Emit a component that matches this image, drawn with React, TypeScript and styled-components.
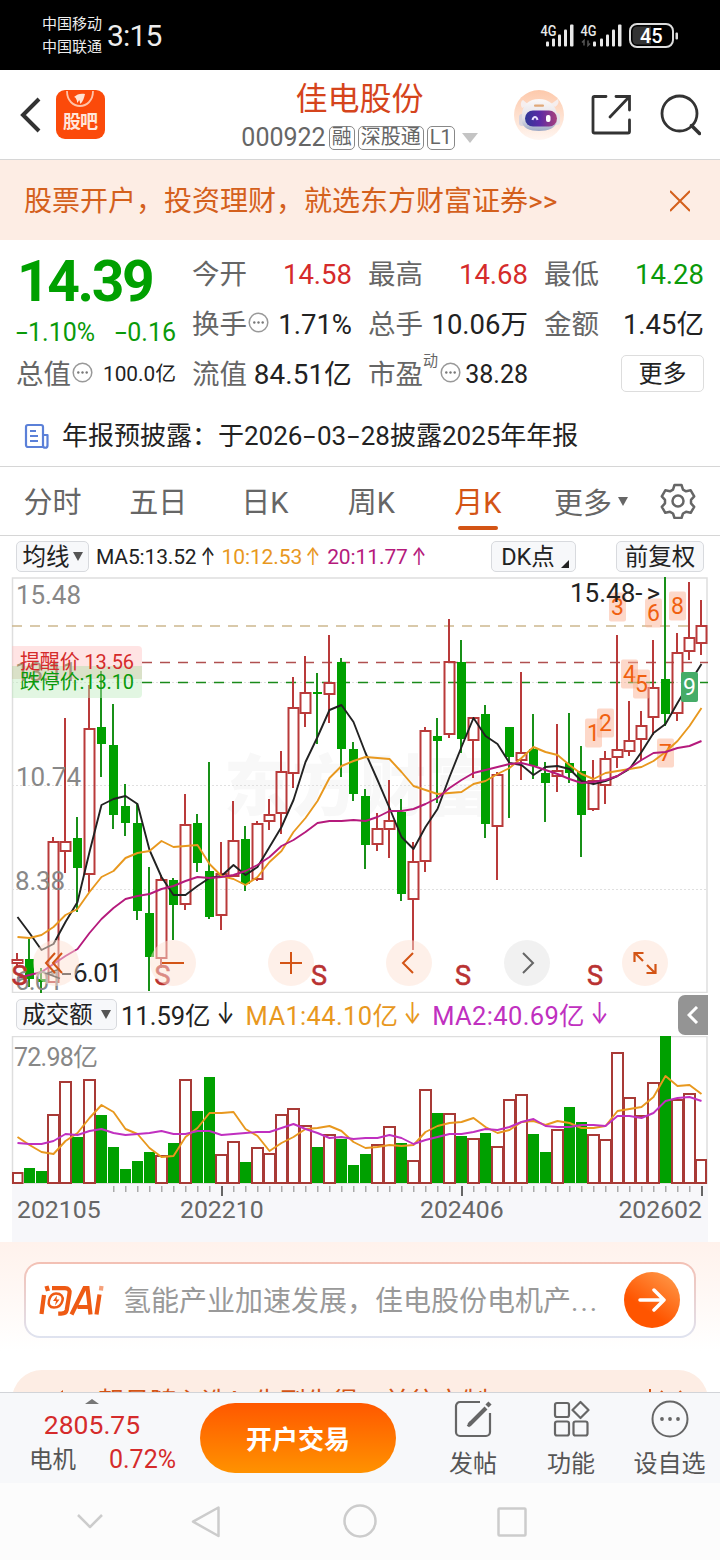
import React from "react";
import styled, { createGlobalStyle } from "styled-components";

const GlobalStyle = createGlobalStyle`
  * { box-sizing: border-box; }
  html, body { margin: 0; padding: 0; background: #fff; }
  body { font-family: Roboto, "Noto Sans CJK SC", sans-serif; color: #222; overflow: hidden; }
  svg { display: block; flex: none; }
`;

const RED = "#d52b2b";
const GREEN = "#0a9a0a";
const ORANGE = "#d35415";
const SVG_FONT = 'Roboto, "Noto Sans CJK SC", sans-serif';

const Screen = styled.div`
  width: 720px;
  height: 1560px;
  display: flex;
  flex-direction: column;
  background: #fff;
  overflow: hidden;
`;

const Text = styled.span<{ $size: number; $color?: string; $ls?: number; $bold?: boolean }>`
  font-size: ${(p) => p.$size}px;
  line-height: 1.2;
  color: ${(p) => p.$color ?? "#222"};
  letter-spacing: ${(p) => p.$ls ?? 0}px;
  font-weight: ${(p) => (p.$bold ? 700 : 400)};
  white-space: nowrap;
`;
/* a hyphen as wide as a digit */
const Dash = styled.span<{ $w: number }>`
  display: inline-block;
  width: ${(p) => p.$w}px;
  text-align: center;
  transform: scaleX(1.7);
  letter-spacing: 0;
`;

/* ---------- status bar ---------- */
const StatusBar = styled.div`
  height: 70px;
  flex: none;
  background: #000;
  display: flex;
  align-items: center;
  padding: 2px 40px 0 42px;
`;
const Carriers = styled.div`
  display: flex;
  flex-direction: column;
  font-size: 15px;
  line-height: 23px;
  color: #eee;
  width: 65px;
`;
const StatusSpacer = styled.div`flex: 1;`;

const SignalIcons = () => (
  <svg width="140" height="34" viewBox="540 18.500 140 34" fontFamily={SVG_FONT}>
    <g fill="#e8e8e8">
      <text x="540.5" y="35" fontSize="14" fontWeight="500" textLength="16" lengthAdjust="spacingAndGlyphs">4G</text>
      <rect x="546" y="41" width="3" height="5" rx="1" /><rect x="552" y="38" width="3" height="8" rx="1" />
      <rect x="558" y="34" width="3" height="12" rx="1" /><rect x="564" y="29" width="3" height="17" rx="1" />
      <rect x="570" y="24" width="3.500" height="22" rx="1" />
      <text x="580.5" y="35" fontSize="14" fontWeight="500" textLength="16" lengthAdjust="spacingAndGlyphs">4G</text>
      <rect x="593" y="41" width="3" height="5" rx="1" /><rect x="600" y="38" width="3" height="8" rx="1" />
      <rect x="606" y="34" width="3" height="12" rx="1" /><rect x="612" y="29" width="3" height="17" rx="1" />
      <rect x="618" y="24" width="3.500" height="22" rx="1" />
    </g>
    <path d="M584 45v-5l-2 2M588 40v5l2-2" stroke="#555" strokeWidth="1.500" fill="none" />
    <rect x="630" y="23.500" width="43" height="23" rx="7" fill="#000" stroke="#ddd" strokeWidth="2" />
    <path d="M651 26h-14a4.500 4.500 0 0 0-4.500 4.500v9a4.500 4.500 0 0 0 4.500 4.500h14z" fill="#333" />
    <rect x="675.500" y="32" width="2.500" height="7" rx="1" fill="#ddd" />
    <text x="640" y="42.500" fontSize="20" fontWeight="500" fill="#fff">45</text>
  </svg>
);

/* ---------- header ---------- */
const Header = styled.header`
  height: 90px;
  flex: none;
  display: flex;
  align-items: center;
  border-bottom: 1px solid #d6d6d6;
  padding: 0 19px;
`;
const TitleBlock = styled.div`
  flex: 1;
  display: flex;
  flex-direction: column;
  align-items: center;
  padding: 3px 0 0 100px;
`;
const CodeRow = styled.div`
  display: flex;
  align-items: center;
  gap: 3px;
  height: 28px;
  margin-top: 5px;
`;
const Tag = styled.span`
  height: 24px;
  line-height: 21px;
  padding: 0 2px;
  border: 1.5px solid #888;
  border-radius: 5px;
  font-size: 20px;
  color: #666;
`;
const Triangle = styled.i<{ $w: number; $h: number; $color: string; $ml?: number }>`
  width: 0;
  height: 0;
  margin-left: ${(p) => p.$ml ?? 0}px;
  border-left: ${(p) => p.$w / 2}px solid transparent;
  border-right: ${(p) => p.$w / 2}px solid transparent;
  border-top: ${(p) => p.$h}px solid ${(p) => p.$color};
`;
const HeaderIcon = styled.div<{ $ml: number }>`
  margin-left: ${(p) => p.$ml}px;
`;

const BackIcon = () => (
  <svg width="24" height="38" viewBox="0 0 24 38" fill="none" stroke="#333" strokeWidth="4">
    <path d="M20 3 4 19l16 16" />
  </svg>
);
const GubaLogo = () => (
  <svg width="49" height="49" viewBox="0 0 49 49">
    <rect width="49" height="49" rx="9" fill="#fb4a0a" />
    <path d="M11 1c0 20 26 20 26 0" fill="none" stroke="#ffc3a8" strokeWidth="1.800" />
    <path d="M18 7c3-3 7-4 11-3-1 4-2 8-5 10 0-2 0-3-1-4 0 1-1 2-2 3 0-2 0-3-1-4 0-1-1-2-2-2z" fill="#ffe2d2" />
    <text x="7" y="38" fontSize="18" fontWeight="700" fill="#ffe6da" fontFamily={SVG_FONT} textLength="35">股吧</text>
  </svg>
);
const RobotIcon = () => (
  <svg width="50" height="50" viewBox="0 0 50 50">
    <defs>
      <linearGradient id="rbg" x1="0" y1="0" x2="0" y2="1">
        <stop offset="0" stopColor="#fdc9ab" /><stop offset="1" stopColor="#fff6f1" />
      </linearGradient>
      <linearGradient id="visor" x1="0" y1="0" x2="1" y2="0">
        <stop offset="0" stopColor="#2f3796" /><stop offset=".45" stopColor="#5a2aa6" /><stop offset="1" stopColor="#a8407c" />
      </linearGradient>
      <linearGradient id="head" x1="0" y1="0" x2="0" y2="1">
        <stop offset="0" stopColor="#fbf8f8" /><stop offset=".6" stopColor="#e3e0e6" /><stop offset="1" stopColor="#9aa6c4" />
      </linearGradient>
    </defs>
    <circle cx="25" cy="25" r="25" fill="url(#rbg)" />
    <path d="M8 18c-2-4-1-7 1-8l6 5M41 17c4-3 4-5 3-8l-7 5" fill="#f6eeee" />
    <rect x="5" y="24" width="6" height="12" rx="3" fill="#d9d5de" /><rect x="40" y="23" width="6" height="12" rx="3" fill="#e6e2e8" />
    <path d="M8 25c0-10 7-16 17-16s17 6 18 16v6c-1 7-9 10-18 10S8 38 8 31z" fill="url(#head)" />
    <rect x="11" y="20.500" width="32" height="16" rx="8" fill="url(#visor)" />
    <rect x="20" y="14.500" width="10" height="2.200" rx="1" fill="#e0a878" />
    <path d="M18.500 30c1-4 4-4 5 0" stroke="#e8e0ff" strokeWidth="2" fill="none" />
    <rect x="32" y="25" width="4.500" height="7" rx="2" fill="#fff" />
  </svg>
);
const ShareIcon = () => (
  <svg width="42" height="42" viewBox="0 0 42 42" fill="none" stroke="#333" strokeWidth="2.800" strokeLinecap="round">
    <path d="M16 2.500H4.500A1.500 1.500 0 0 0 3 4v33.500A1.500 1.500 0 0 0 4.500 39H38a1.500 1.500 0 0 0 1.500-1.500V26" />
    <path d="M26 2.500h13.500V16M39 3 20 23" />
  </svg>
);
const SearchIcon = () => (
  <svg width="42" height="42" viewBox="0 0 42 42" fill="none" stroke="#333" strokeWidth="2.800">
    <circle cx="20.500" cy="19.500" r="17.500" />
    <path d="m32.500 31.500 8 8" strokeWidth="3.500" strokeLinecap="round" />
  </svg>
);

/* ---------- ad banner ---------- */
const Banner = styled.div`
  height: 80px;
  flex: none;
  background: #fdede4;
  display: flex;
  align-items: center;
  justify-content: space-between;
  padding: 2px 30px 0 24px;
`;
const BannerText = styled(Text)`
  padding-top: 2px;
`;

/* ---------- quote ---------- */
const Quote = styled.section`
  height: 159px;
  flex: none;
  display: grid;
  grid-template-columns: 160px 1fr;
  column-gap: 16px;
  padding: 9px 16px 0;
`;
const PriceColumn = styled.div`
  display: flex;
  flex-direction: column;
`;
const PriceBox = styled.div`
  height: 66px;
  display: flex;
  align-items: center;
  padding-left: 1px;
`;
const Cells = styled.div`
  display: grid;
  grid-template-columns: repeat(3, 160px);
  grid-auto-rows: 50px;
  column-gap: 16px;
`;
const Cell = styled.div<{ $h?: number }>`
  display: flex;
  align-items: center;
  justify-content: space-between;
  height: ${(p) => p.$h ?? 50}px;
  padding-top: 1px;
`;
const Label = styled.span`
  display: flex;
  align-items: center;
  font-size: 27.5px;
  line-height: 1.2;
  color: #666;
  white-space: nowrap;
  svg { margin: -5px 0 0 1px; }
`;
const Sup = styled.span`
  font-size: 15px;
  color: #666;
  margin: -27px 1px 0 0;
`;
const MoreButton = styled.button`
  margin-left: auto;
  width: 83px;
  height: 37px;
  border: 1px solid #ddd;
  border-radius: 5px;
  background: #fff;
  font: 24px/34px Roboto, "Noto Sans CJK SC", sans-serif;
  color: #222;
  padding: 0;
  margin-top: -2px;
`;
const InfoIcon = () => (
  <svg width="21" height="21" viewBox="0 0 21 21">
    <circle cx="10.500" cy="10.500" r="9.300" fill="none" stroke="#999" strokeWidth="1.500" />
    <g fill="#777"><circle cx="6.300" cy="10.500" r="1.200" /><circle cx="10.500" cy="10.500" r="1.200" /><circle cx="14.700" cy="10.500" r="1.200" /></g>
  </svg>
);
const Notice = styled.div`
  height: 68px;
  flex: none;
  display: flex;
  align-items: center;
  gap: 12px;
  padding: 6px 24px 0;
  border-bottom: 1px solid #d6d6d6;
`;
const NoticeText = styled(Text)`
  padding-top: 3px;
`;
const NoticeIcon = () => (
  <svg width="26" height="26" viewBox="0 0 26 26" fill="none" stroke="#5b80d8" strokeWidth="2.200" strokeLinejoin="round">
    <path d="M19 24H4a2 2 0 0 1-2-2V4a2 2 0 0 1 2-2h13a2 2 0 0 1 2 2v18.500a1.800 1.800 0 0 0 4.500 0V12H19" />
    <path d="M6 8h6M6 13h8M6 18h8" />
  </svg>
);

/* ---------- tabs ---------- */
const Tabs = styled.nav`
  height: 69px;
  flex: none;
  display: grid;
  grid-template-columns: 105px repeat(4, 106.5px) 125px 1fr;
  border-bottom: 1px solid #d6d6d6;
`;
const Tab = styled.div<{ $active?: boolean }>`
  display: flex;
  flex-direction: column;
  align-items: center;
  justify-content: space-between;
  font-size: 29px;
  line-height: 35px;
  color: ${(p) => (p.$active ? ORANGE : "#666")};
  padding: 19px 0 5px;
  &::after {
    content: "";
    width: 40px;
    height: 4px;
    border-radius: 2px;
    background: ${(p) => (p.$active ? ORANGE : "transparent")};
  }
`;
const MoreTab = styled.div`
  display: flex;
  align-items: center;
  gap: 6px;
  font-size: 29px;
  color: #666;
  padding-left: 23px;
`;
const GearCell = styled.div`
  display: flex;
  align-items: center;
  padding-left: 4px;
`;
const GearIcon = () => (
  <svg width="36" height="36" viewBox="0 0 36 36" fill="none" stroke="#666" strokeWidth="2.500" strokeLinejoin="round">
    <path d="M14.500 2h7l1.500 4.600 3 1.700 4.700-1 3.500 6-3.200 3.600v3.400l3.200 3.500-3.500 6-4.700-1-3 1.700-1.500 4.500h-7L13 30.500l-3-1.700-4.700 1-3.500-6L5 20.300v-3.400l-3.200-3.600 3.500-6 4.700 1 3-1.700z" />
    <circle cx="18" cy="18" r="5.500" />
  </svg>
);

/* ---------- moving-average bar ---------- */
const MaBar = styled.div`
  height: 41px;
  flex: none;
  display: flex;
  align-items: center;
  padding: 0 16px;
`;
const Chip = styled.button<{ $w: number; $ml?: number }>`
  width: ${(p) => p.$w}px;
  margin-left: ${(p) => p.$ml ?? 0}px;
  height: 31px;
  flex: none;
  display: flex;
  align-items: center;
  justify-content: center;
  gap: 3px;
  border: 1px solid #d8dade;
  border-radius: 5px;
  background: #f7f8fa;
  font: 23.5px/28px Roboto, "Noto Sans CJK SC", sans-serif;
  color: #222;
  padding: 0;
  white-space: nowrap;
`;
const Corner = styled.i`
  border-left: 8px solid transparent;
  border-bottom: 8px solid #222;
  align-self: flex-end;
  margin: 0 -3px 3px 3px;
`;
const MaText = styled.span<{ $color: string; $ml: number; $size: number; $ls: number; $up?: number }>`
  margin-left: ${(p) => p.$ml}px;
  margin-top: ${(p) => -(p.$up ?? 0)}px;
  color: ${(p) => p.$color};
  font-size: ${(p) => p.$size}px;
  letter-spacing: ${(p) => p.$ls}px;
  display: flex;
  align-items: center;
  white-space: nowrap;
`;
const Arrow = styled.span<{ $w: number }>`
  font-family: Inter, sans-serif;
  width: ${(p) => p.$w}px;
  display: flex;
  justify-content: center;
  letter-spacing: 0;
  transform: scale(0.85, 1.15);
`;

/* ---------- charts ---------- */
const ChartArea = styled.div`
  position: relative;
  height: 416px;
  flex: none;
`;
const ToolButton = styled.div<{ $x: number; $grey?: boolean }>`
  position: absolute;
  left: ${(p) => p.$x - 23}px;
  top: 363px;
  width: 46px;
  height: 46px;
  border-radius: 50%;
  background: ${(p) => (p.$grey ? "rgba(238,238,238,.8)" : "rgba(253,226,212,.5)")};
  color: ${(p) => (p.$grey ? "#666" : ORANGE)};
  display: flex;
  align-items: center;
  justify-content: center;
`;

// high, body top, body bottom, low, rising
type Candle = [number, number, number, number, number];
const CANDLES: Candle[] = [
  [953, 960, 963, 968, 1], [939, 959, 979, 987, 0], [968, 979, 982, 993, 0], [837, 842, 982, 983, 1],
  [718, 842, 851, 873, 1], [817, 838, 868, 912, 0], [685, 729, 874, 892, 1], [671, 727, 744, 777, 0],
  [704, 745, 815, 829, 0], [784, 806, 823, 836, 0], [803, 823, 911, 920, 0], [867, 913, 957, 991, 0],
  [875, 880, 958, 968, 1], [878, 880, 905, 940, 0], [794, 825, 904, 910, 1], [814, 823, 863, 872, 0],
  [762, 871, 917, 919, 0], [842, 874, 915, 930, 1], [801, 841, 876, 877, 1], [826, 839, 884, 891, 0],
  [821, 824, 879, 881, 1], [799, 815, 821, 830, 1], [751, 772, 813, 834, 1], [677, 708, 773, 788, 1],
  [656, 693, 713, 727, 1], [673, 692, 694, 744, 0], [635, 683, 694, 723, 1], [658, 662, 749, 777, 0],
  [742, 749, 794, 801, 0], [789, 796, 845, 869, 0], [813, 829, 844, 851, 1], [780, 821, 829, 858, 1],
  [799, 812, 894, 901, 0], [842, 862, 899, 950, 1], [727, 731, 861, 872, 1], [718, 736, 741, 803, 0],
  [619, 662, 734, 738, 1], [640, 662, 739, 753, 0], [717, 718, 740, 778, 1], [705, 714, 824, 838, 0],
  [772, 775, 826, 880, 1], [727, 727, 757, 818, 0], [672, 753, 760, 780, 1], [714, 749, 766, 779, 0],
  [762, 773, 783, 822, 0], [724, 771, 776, 792, 1], [713, 763, 773, 783, 0], [746, 771, 815, 857, 0],
  [760, 781, 809, 811, 1], [751, 759, 785, 804, 1], [635, 750, 757, 768, 1], [701, 741, 751, 756, 1],
  [711, 726, 739, 760, 1], [640, 688, 717, 735, 1], [577, 679, 714, 726, 0], [633, 653, 713, 721, 1],
  [582, 638, 651, 660, 1], [600, 626, 643, 655, 1],
];
const MA5 = [917, 933, 950, 944, 922, 902, 852, 805, 799, 796, 804, 850, 877, 895, 895, 886, 878, 876, 865, 875, 867, 847, 827, 800, 762, 737, 710, 705, 722, 753, 780, 808, 837, 849, 827, 809, 777, 747, 718, 736, 744, 763, 765, 775, 767, 766, 769, 781, 784, 781, 776, 769, 752, 733, 724, 703, 683, 664];
const MA10 = [937, 938, 935, 927, 915, 909, 892, 877, 871, 858, 853, 851, 841, 847, 846, 845, 864, 876, 879, 885, 877, 862, 851, 832, 818, 801, 778, 766, 761, 757, 758, 759, 772, 786, 790, 794, 793, 792, 784, 781, 774, 768, 758, 747, 752, 755, 765, 774, 779, 773, 771, 769, 767, 761, 752, 741, 726, 708];
const MA20 = [978, 975, 972, 964, 956, 949, 933, 919, 908, 899, 896, 894, 889, 886, 881, 877, 878, 877, 875, 871, 865, 857, 846, 840, 832, 823, 821, 821, 820, 821, 817, 811, 811, 809, 804, 798, 788, 780, 773, 770, 767, 764, 763, 766, 770, 774, 779, 783, 782, 780, 776, 768, 760, 753, 752, 748, 746, 741];
const VOLUMES = [1172, 1168, 1171, 1114, 1081, 1137, 1079, 1115, 1147, 1169, 1161, 1152, 1155, 1143, 1079, 1111, 1077, 1154, 1141, 1162, 1147, 1153, 1114, 1108, 1125, 1147, 1134, 1139, 1165, 1154, 1144, 1126, 1143, 1160, 1089, 1113, 1113, 1136, 1138, 1133, 1146, 1099, 1094, 1134, 1152, 1129, 1107, 1122, 1134, 1139, 1052, 1097, 1115, 1082, 1036, 1099, 1093, 1159];
const FILLED = new Set(VOLUMES.map((_, i) => i).filter((i) => !CANDLES[i][4]));
const VMA1 = [1137, 1145, 1152, 1154, 1141, 1133, 1118, 1105, 1112, 1129, 1134, 1148, 1157, 1156, 1137, 1128, 1113, 1113, 1112, 1129, 1136, 1151, 1143, 1137, 1129, 1128, 1126, 1131, 1142, 1148, 1147, 1145, 1146, 1145, 1132, 1126, 1123, 1122, 1118, 1127, 1133, 1130, 1122, 1121, 1125, 1121, 1123, 1128, 1128, 1126, 1111, 1109, 1107, 1097, 1076, 1086, 1085, 1094];
const VMA2 = [1143, 1144, 1144, 1141, 1134, 1135, 1131, 1129, 1133, 1135, 1134, 1133, 1131, 1134, 1134, 1131, 1131, 1135, 1134, 1133, 1132, 1132, 1128, 1124, 1129, 1133, 1138, 1137, 1139, 1138, 1138, 1135, 1138, 1144, 1140, 1137, 1134, 1134, 1132, 1129, 1130, 1127, 1122, 1119, 1126, 1127, 1127, 1125, 1125, 1126, 1116, 1116, 1118, 1113, 1101, 1098, 1097, 1101];
FILLED.delete(41);
[39].forEach((i) => FILLED.add(i));

const cx = (i: number) => 17 + i * 12;
const points = (v: number[]) => v.map((y, i) => `${cx(i) + 0.5},${y}`).join(" ");

const MARKS: [string, number, number][] = [
  ["1", 593, 733], ["2", 605, 723], ["3", 617, 607], ["4", 629, 674], ["5", 641, 684],
  ["6", 653, 613], ["7", 665, 753], ["8", 677, 606],
];

const PriceChart = () => (
  <svg width="720" height="416" viewBox="0 577 720 416" fontFamily={SVG_FONT}>
    <text x="224" y="810" fontSize="66" fontWeight="900" fill="#f8f8f8" textLength="270">东方财富</text>
    <g stroke="#e0e0e0" strokeDasharray="2 2"><path d="M12 682.500H708M12 785.500H708M12 889.500H708" /></g>
    <rect x="12.500" y="578" width="694.500" height="414.500" fill="none" stroke="#dedede" strokeWidth="1.500" />
    <path d="M12 626H708" stroke="#cdb88e" strokeWidth="1.500" strokeDasharray="10 8" />
    <path d="M142 662.500H708" stroke="#b05050" strokeWidth="1.500" strokeDasharray="10 8" />
    <path d="M142 682.500H708" stroke="#1a8a1a" strokeWidth="1.500" strokeDasharray="10 8" />
    {CANDLES.map(([h, t, b, l, up], i) => {
      const x = cx(i);
      return up ? (
        <g key={i} stroke="#b93a3a" strokeWidth="2" fill="none">
          <path d={`M${x} ${h}V${t}M${x} ${b}V${l}`} />
          <rect x={x - 4.5} y={t} width="10" height={b - t} />
        </g>
      ) : (
        <g key={i} fill="#00a000">
          <rect x={x - 1} y={h} width="2" height={l - h} fill="#189018" />
          <rect x={x - 4} y={t} width="9" height={b - t} />
        </g>
      );
    })}
    {MARKS.map(([n, x, y]) => (
      <g key={n}>
        <rect x={x - 8} y={y - 14.5} width="17" height="29" rx="2" fill="rgba(252,178,148,.5)" />
        <text x={x + 0.5} y={y + 8} fontSize="23" fill="#f06010" textAnchor="middle">{n}</text>
      </g>
    ))}
    <g fill="none" strokeWidth="1.900" strokeLinejoin="round">
      <polyline points={points(MA5)} stroke="#222" />
      <polyline points={points(MA10)} stroke="#e8981e" />
      <polyline points={points(MA20)} stroke="#b51a7c" />
    </g>
    <rect x="681" y="672" width="17" height="30" rx="2" fill="#45ac68" />
    <text x="689.500" y="695" fontSize="23" fill="#fff" textAnchor="middle">9</text>
    <g fill="#888" fontSize="26">
      <text x="16" y="604" textLength="65">15.48</text>
      <text x="16" y="786" textLength="65">10.74</text>
      <text x="15" y="890" textLength="50">8.38</text>
      <text x="15" y="990" textLength="48">6.01</text>
    </g>
    <path d="M12 646h126a4 4 0 0 1 4 4v16H12z" fill="rgba(255,190,190,.42)" />
    <path d="M12 666h130v28a4 4 0 0 1-4 4H12z" fill="rgba(190,235,190,.45)" />
    <path d="M12 666h130v13H12z" fill="rgba(190,150,110,.22)" />
    <text x="15" y="681" fontSize="26" fill="#a89478" textLength="62">13.11</text>
    <text x="20" y="668.500" fontSize="20" fill={RED} textLength="114">提醒价 13.56</text>
    <text x="20" y="689" fontSize="20" fill={GREEN} textLength="114">跌停价:13.10</text>
    <g fill="#222" fontSize="26">
      <text x="570" y="602">15.48<tspan letterSpacing="4">-&gt;</tspan></text>
      <text x="73" y="982" textLength="49">6.01</text>
      <path d="M62 974h9M60 969l-13 4.500 13 5" stroke="#222" strokeWidth="1.800" fill="none" />
    </g>
    <g fill="#b93232" fontSize="27" textAnchor="middle" stroke="#b93232" strokeWidth=".6">
      <text x="19.500" y="985">S</text><text x="162.500" y="985">S</text><text x="319" y="985">S</text>
      <text x="463" y="985">S</text><text x="595" y="985">S</text>
    </g>
  </svg>
);

const ToolGlyph = ({ d, s = 2 }: { d: string; s?: number }) => (
  <svg width="28" height="28" viewBox="0 0 28 28" fill="none" stroke="currentColor" strokeWidth={s}><path d={d} /></svg>
);

const VolumeBar = styled.div`
  height: 43px;
  flex: none;
  display: flex;
  align-items: center;
  padding: 0 12px 0 16px;
`;
const CollapseTab = styled.div`
  margin-left: auto;
  width: 30px;
  height: 40px;
  border-radius: 7px 0 0 7px;
  background: #949494;
  display: flex;
  align-items: center;
  justify-content: center;
`;
const VolumeChart = () => (
  <svg width="720" height="148" viewBox="0 1036 720 148" fontFamily={SVG_FONT}>
    <rect x="12.500" y="1036.500" width="694.500" height="147" fill="none" stroke="#dedede" strokeWidth="1.500" />
    {VOLUMES.map((y, i) =>
      FILLED.has(i) ? (
        <rect key={i} x={cx(i) - 5} y={y} width="11" height={1183 - y} fill="#00a000" />
      ) : (
        <rect key={i} x={Math.max(cx(i) - 5, 13)} y={y + 1} width={i === 57 ? 10 : i === 0 ? 9.5 : 11} height={1182 - y} fill="#fff" stroke="#a83a36" strokeWidth="2" />
      )
    )}
    <g fill="none" strokeWidth="1.900" strokeLinejoin="round">
      <polyline points={points(VMA1)} stroke="#e8981e" />
      <polyline points={points(VMA2)} stroke="#c030c0" />
    </g>
    <text x="14" y="1066" fontSize="25" fill="#888" textLength="84">72.98亿</text>
  </svg>
);
const Axis = styled.div`
  height: 58px;
  flex: none;
  margin: 0 12px;
  background: #f7f7fa;
`;
const AxisTicks = () => (
  <svg width="696" height="14" viewBox="12 1184 696 14">
    {CANDLES.map((_, i) => {
      const major = i === 17 || i === 37 || i === 57;
      return i < 8 ? null : (
        <rect key={i} x={cx(i)} y="1186" width={major ? 2 : 1.5} height={major ? 10 : 6} fill={major ? "#666" : "#aaa"} />
      );
    })}
  </svg>
);
const AxisLabels = styled.div`
  display: grid;
  grid-template-columns: 163px 240px 1fr auto;
  padding: 0 6px 0 5px;
  font-size: 24.8px;
  line-height: 26px;
  margin-top: -1px;
  color: #666;
`;

/* ---------- AI prompt ---------- */
const AiSection = styled.section`
  height: 128px;
  flex: none;
  padding: 20px 24px;
  background: linear-gradient(#fff2ec, #fff 85%);
`;
const AiBox = styled.div`
  height: 76px;
  border-radius: 16px;
  border: 2px solid transparent;
  background: linear-gradient(#fff, #fff) padding-box, linear-gradient(#f3c0b4, #dfe3f0) border-box;
  display: flex;
  align-items: center;
  padding: 0 14px 0 13px;
`;
const AiPrompt = styled(Text)`
  margin-left: 18px;
  padding-top: 4px;
`;
const AiLogo = () => (
  <svg width="66" height="36" viewBox="0 0 66 36" fill="none" stroke="#ee5a14" strokeWidth="4.200">
    <path d="m7.500 4 1.500 5M5 13 2.500 32" />
    <path d="M13 6.200h13c3.500 0 5 2 4.500 5l-2.800 17c-.5 2.500-2 3.500-5.500 3.500h-3" />
    <path d="M17 11.500c5 0 7.500 3 6.500 7s-4 7-8.500 7-6-3-5-7 3-7 7-7z" strokeWidth="2.500" />
    <path d="m18 13.500-4 5.500h3l-1 4.500 4.500-6h-3z" fill="#ee5a14" stroke="none" />
    <path d="M32.500 32.500 45.500 6h3l3 26.500M38.500 25h11" />
    <path d="m60.500 12.500-3 20" /><path d="m62.500 4-.6 4.500" stroke="#f5a07a" />
  </svg>
);
const Send = styled.div`
  margin-left: auto;
  width: 56px;
  height: 56px;
  border-radius: 50%;
  background: linear-gradient(215deg, #ff9a4a 5%, #ff5500 65%);
  display: flex;
  align-items: center;
  justify-content: center;
`;

/* ---------- promo strip ---------- */
const PromoClip = styled.div`
  height: 22px;
  flex: none;
  overflow: hidden;
  padding: 0 12px;
`;
const Promo = styled.div`
  height: 60px;
  border-radius: 30px;
  background: #fdede4;
  display: flex;
  align-items: center;
  padding: 5px 12px 0 34px;
`;
const PromoText = styled(Text)`
  margin-left: 28px;
`;

/* ---------- bottom bar ---------- */
const BottomBar = styled.footer`
  height: 91px;
  flex: none;
  display: flex;
  background: #f7f8fa;
  border-top: 1px solid #d2d4d8;
`;
const IndexBox = styled.div`
  width: 184px;
  display: flex;
  flex-direction: column;
  align-items: center;
  padding-top: 6px;
`;
const IndexValue = styled(Text)`
  margin-top: 5px;
`;
const IndexRow = styled.div`
  display: flex;
  align-self: flex-end;
  width: 155px;
  padding-right: 8px;
  justify-content: space-between;
  align-items: center;
  height: 32px;
  margin-top: 3px;
`;
const TradeButton = styled.button`
  width: 196px;
  height: 70px;
  margin: 10px 0 0 16px;
  padding: 3px 0 0;
  border: 0;
  border-radius: 35px;
  background: linear-gradient(#ff5800, #ff9200);
  color: #fff;
  font: 700 26px/1 Roboto, "Noto Sans CJK SC", sans-serif;
`;
const Action = styled.div<{ $w: number }>`
  width: ${(p) => p.$w}px;
  display: flex;
  flex-direction: column;
  align-items: center;
  padding-top: 7px;
  gap: 12px;
`;
const Actions = styled.div`
  display: flex;
  margin-left: 28px;
`;
const SystemNav = styled.div`
  flex: 1;
  background: #fcfcfc;
  display: flex;
  align-items: center;
`;

export default function App() {
  return (
    <Screen>
      <GlobalStyle />
      <StatusBar>
        <Carriers><span>中国移动</span><span>中国联通</span></Carriers>
        <Text $size={30} $color="#eee" $ls={-0.8}>3:15</Text>
        <StatusSpacer />
        <SignalIcons />
      </StatusBar>

      <Header>
        <BackIcon />
        <HeaderIcon $ml={13}><GubaLogo /></HeaderIcon>
        <TitleBlock>
          <Text $size={32} $color="#d5441c">佳电股份</Text>
          <CodeRow>
            <Text $size={25} $color="#666">000922</Text>
            <Tag>融</Tag><Tag>深股通</Tag><Tag>L1</Tag>
            <Triangle $w={16} $h={10} $color="#c4c4c4" $ml={4} />
          </CodeRow>
        </TitleBlock>
        <RobotIcon />
        <HeaderIcon $ml={26}><ShareIcon /></HeaderIcon>
        <HeaderIcon $ml={27}><SearchIcon /></HeaderIcon>
      </Header>

      <Banner>
        <BannerText $size={28} $color="#d4601c">股票开户，投资理财，就选东方财富证券&gt;&gt;</BannerText>
        <svg width="20" height="22" viewBox="0 0 20 22" stroke="#d4601c" strokeWidth="2"><path d="m0 1 20 20M20 1 0 21" /></svg>
      </Banner>

      <Quote>
        <PriceColumn>
          <PriceBox><Text $size={57} $color="#00a000" $ls={-2.4} $bold>14.39</Text></PriceBox>
          <Cell $h={34}>
            <Text $size={25} $color={GREEN}><Dash $w={12}>-</Dash>1.10%</Text>
            <Text $size={25} $color={GREEN}><Dash $w={12}>-</Dash>0.16</Text>
          </Cell>
          <Cell><Label>总值<InfoIcon /></Label><Text $size={20.8}>100.0亿</Text></Cell>
        </PriceColumn>
        <Cells>
          <Cell><Label>今开</Label><Text $size={27.5} $color={RED}>14.58</Text></Cell>
          <Cell><Label>最高</Label><Text $size={27.5} $color={RED}>14.68</Text></Cell>
          <Cell><Label>最低</Label><Text $size={27.5} $color={GREEN}>14.28</Text></Cell>
          <Cell><Label>换手<InfoIcon /></Label><Text $size={27.5}>1.71%</Text></Cell>
          <Cell><Label>总手</Label><Text $size={27.5}>10.06万</Text></Cell>
          <Cell><Label>金额</Label><Text $size={27.5}>1.45亿</Text></Cell>
          <Cell><Label>流值</Label><Text $size={27.8} $ls={0.1}>84.51亿</Text></Cell>
          <Cell><Label>市盈<Sup>动</Sup><InfoIcon /></Label><Text $size={25}>38.28</Text></Cell>
          <Cell><MoreButton>更多</MoreButton></Cell>
        </Cells>
      </Quote>

      <Notice>
        <NoticeIcon />
        <NoticeText $size={26}>年报预披露：于2026<Dash $w={14.5}>-</Dash>03<Dash $w={14.5}>-</Dash>28披露2025年年报</NoticeText>
      </Notice>

      <Tabs>
        <Tab>分时</Tab><Tab>五日</Tab><Tab>日K</Tab><Tab>周K</Tab><Tab $active>月K</Tab>
        <MoreTab>更多<Triangle $w={11} $h={9} $color="#666" /></MoreTab>
        <GearCell><GearIcon /></GearCell>
      </Tabs>

      <MaBar>
        <Chip $w={73}>均线<Triangle $w={11} $h={9} $color="#555" /></Chip>
        <MaText $color="#222" $ml={7} $size={21} $ls={-0.15}>MA5:13.52<Arrow $w={22}>↑</Arrow></MaText>
        <MaText $color="#e8981e" $ml={3} $size={21} $ls={-0.1}>10:12.53<Arrow $w={22}>↑</Arrow></MaText>
        <MaText $color="#b51a7c" $ml={3} $size={21} $ls={-0.1}>20:11.77<Arrow $w={22}>↑</Arrow></MaText>
        <StatusSpacer />
        <Chip $w={85}>DK点<Corner /></Chip>
        <Chip $w={88} $ml={40}>前复权</Chip>
      </MaBar>

      <ChartArea>
        <PriceChart />
        <ToolButton $x={56}><ToolGlyph d="M13 4 4 14l9 10M20 4l-9 10 9 10" /></ToolButton>
        <ToolButton $x={173}><ToolGlyph d="M3 14h22" /></ToolButton>
        <ToolButton $x={291}><ToolGlyph d="M3 14h22M14 3v22" /></ToolButton>
        <ToolButton $x={409}><ToolGlyph d="M18 4 8 14l10 10" /></ToolButton>
        <ToolButton $x={527} $grey><ToolGlyph d="m10 4 10 10-10 10" /></ToolButton>
        <ToolButton $x={645}><ToolGlyph d="M3.500 13V4h9M4 4l8 8M24.500 15v9h-9M24 24l-8-8" s={2.2} /></ToolButton>
      </ChartArea>

      <VolumeBar>
        <Chip $w={101}>成交额<Triangle $w={11} $h={9} $color="#555" $ml={5} /></Chip>
        <MaText $color="#222" $ml={4} $size={25.5} $ls={0} $up={2}>11.59亿<Arrow $w={29}>↓</Arrow></MaText>
        <MaText $color="#e8981e" $ml={6} $size={25.5} $ls={0.35} $up={2}>MA1:44.10亿<Arrow $w={29}>↓</Arrow></MaText>
        <MaText $color="#c030c0" $ml={5} $size={25.5} $ls={0.35} $up={2}>MA2:40.69亿<Arrow $w={29}>↓</Arrow></MaText>
        <CollapseTab>
          <svg width="12" height="18" viewBox="0 0 12 18" fill="none" stroke="#fff" strokeWidth="3"><path d="m10 1-8 8 8 8" /></svg>
        </CollapseTab>
      </VolumeBar>
      <VolumeChart />
      <Axis>
        <AxisTicks />
        <AxisLabels><span>202105</span><span>202210</span><span>202406</span><span>202602</span></AxisLabels>
      </Axis>

      <AiSection>
        <AiBox>
          <AiLogo />
          <AiPrompt $size={28} $color="#999">氢能产业加速发展，佳电股份电机产<Text $size={28} $color="#999" $ls={2}>...</Text></AiPrompt>
          <Send>
            <svg width="28" height="26" viewBox="0 0 28 26" fill="none" stroke="#fff" strokeWidth="3.500" strokeLinecap="round" strokeLinejoin="round"><path d="M2 13h24M16 3l10 10-10 10" /></svg>
          </Send>
        </AiBox>
      </AiSection>

      <PromoClip>
        <Promo>
          <svg width="24" height="26" viewBox="0 0 24 26" fill={ORANGE}><path d="M2 9h4L17 0v23L6 17H2z" /></svg>
          <PromoText $size={26} $color={ORANGE}>靓号随心选！先到先得，前往定制</PromoText>
          <StatusSpacer />
          <svg width="50" height="32" viewBox="0 0 50 32" fill="none" stroke={ORANGE} strokeWidth="2"><path d="M4 2v26M15 4l20 22M35 4 15 26" /></svg>
        </Promo>
      </PromoClip>

      <BottomBar>
        <IndexBox>
          <svg width="14" height="5" viewBox="0 0 14 5"><path d="M0 5 7 0l7 5z" fill="#777" /></svg>
          <IndexValue $size={26.5} $color={RED}>2805.75</IndexValue>
          <IndexRow><Text $size={23.5} $color="#555">电机</Text><Text $size={25} $color={RED}>0.72%</Text></IndexRow>
        </IndexBox>
        <TradeButton>开户交易</TradeButton>
        <Actions>
          <Action $w={98}>
            <svg width="38" height="38" viewBox="0 0 38 38" fill="none" stroke="#666" strokeWidth="2.200">
              <path d="M26 2H6a4 4 0 0 0-4 4v26a4 4 0 0 0 4 4h26a4 4 0 0 0 4-4V13" />
              <path d="M32 8 15 25" strokeWidth="4" /><path d="m33 6 3-3" strokeWidth="4.500" /><path d="m17 22-3 4.500" strokeWidth="3" />
            </svg>
            <Text $size={24} $color="#555">发帖</Text>
          </Action>
          <Action $w={98}>
            <svg width="38" height="38" viewBox="0 0 38 38" fill="none" stroke="#666" strokeWidth="2.200" strokeLinejoin="round">
              <rect x="3" y="3" width="14" height="14" rx="2" /><rect x="3" y="21.500" width="14" height="14" rx="2" /><rect x="21.500" y="21.500" width="14" height="14" rx="2" />
              <path d="m28.500 2 8 8-8 8-8-8z" />
            </svg>
            <Text $size={24} $color="#555">功能</Text>
          </Action>
          <Action $w={99}>
            <svg width="38" height="38" viewBox="0 0 38 38" fill="none" stroke="#666" strokeWidth="2">
              <circle cx="19" cy="19" r="17.500" />
              <g fill="#666" stroke="none"><circle cx="11" cy="19" r="1.900" /><circle cx="19" cy="19" r="1.900" /><circle cx="27" cy="19" r="1.900" /></g>
            </svg>
            <Text $size={24} $color="#555">设自选</Text>
          </Action>
        </Actions>
      </BottomBar>

      <SystemNav>
        <svg width="720" height="40" viewBox="0 1502 720 40" fill="none" stroke="#ccc" strokeWidth="2.500" strokeLinejoin="round">
          <path d="m78 1515 12 12 12-12" />
          <path d="M218.500 1507.500v28.500L193 1521.700z" />
          <circle cx="360" cy="1521" r="15.500" />
          <rect x="498.500" y="1508.500" width="27" height="27" rx="1" />
        </svg>
      </SystemNav>
    </Screen>
  );
}
